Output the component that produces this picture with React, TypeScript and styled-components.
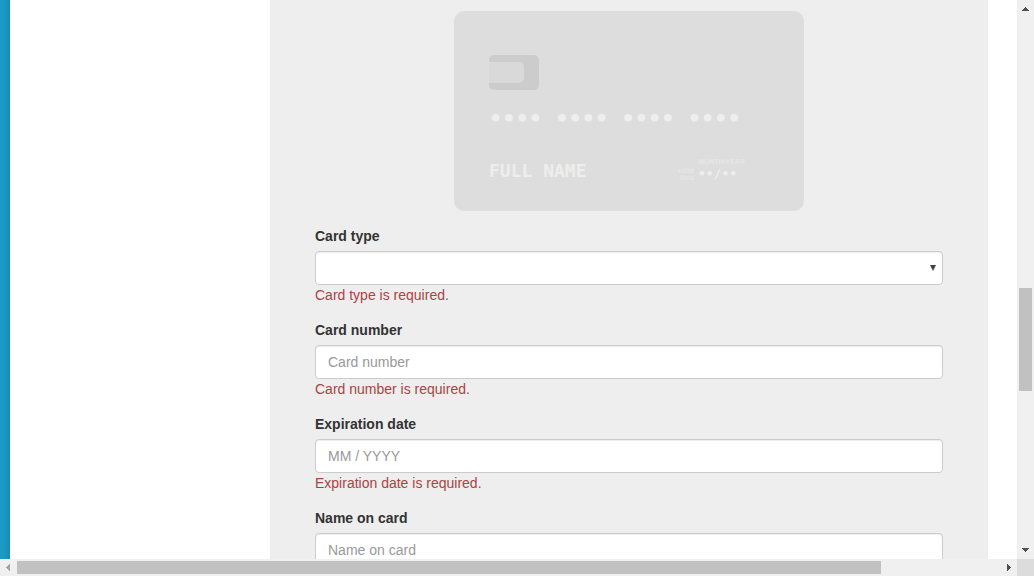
import React from "react";
import styled, { createGlobalStyle } from "styled-components";

const Global = createGlobalStyle`
  * { box-sizing: border-box; }
  body {
    margin: 0;
    font-family: "Liberation Sans", Arial, sans-serif;
    font-size: 14px;
    line-height: 20px;
    color: #333;
    background: #fff;
  }
`;

const Shell = styled.div`
  display: grid;
  grid-template-columns: minmax(0, 1fr) 17px;
  grid-template-rows: minmax(0, 1fr) 17px;
  height: 100vh;
  overflow: hidden;
`;

const Page = styled.div`
  display: flex;
  overflow: hidden;
  background: #fff;
`;

const Edge = styled.div`
  flex: 0 0 10px;
  background: linear-gradient(to right, #1b9ac5, #1b9ac5 40%, #178ab2);
`;

const Sidebar = styled.aside`
  flex: 0 0 260px;
`;

const Panel = styled.main`
  flex: 1;
  margin-right: 29px;
  padding: 11px 45px 0;
  background: #eee;
`;

const Card = styled.section`
  display: flex;
  flex-direction: column;
  width: 350px;
  height: 200px;
  margin: 0 auto 15px;
  padding: 44px 35px 0;
  border-radius: 10px;
  background: #ddd;
  color: #eee;
  font-family: "DejaVu Sans Mono", monospace;
  font-weight: bold;
`;

const Chip = styled.div`
  display: flex;
  align-items: center;
  width: 50px;
  height: 35px;
  border-radius: 5px;
  background: #ccc;
`;

const ChipInner = styled.div`
  width: 35px;
  height: 21px;
  border-radius: 0 5px 5px 0;
  background: #d9d9d9;
`;

const CardNumber = styled.div`
  margin-top: 16px;
  font-size: 22px;
  line-height: 26px;
  white-space: pre;
`;

const CardFooter = styled.div`
  display: flex;
  justify-content: space-between;
  margin-top: 26px;
  padding-right: 24px;
`;

const CardName = styled.div`
  padding-top: 2px;
  font-size: 18px;
  line-height: 22px;
`;

const Expiry = styled.div`
  display: grid;
  grid-template-columns: auto auto;
  column-gap: 4px;
  align-content: start;
`;

const Caption = styled.div`
  grid-column: 2;
  color: #e6e6e6;
  font: bold 7px/7px "Liberation Sans", Arial, sans-serif;
`;

const ValidThru = styled.div`
  padding-top: 2px;
  color: #e6e6e6;
  font: bold 7px/7px "Liberation Sans", Arial, sans-serif;
  text-align: right;
`;

const ExpiryDate = styled.div`
  font-size: 13px;
  line-height: 17px;
`;

const Field = styled.div`
  display: flex;
  flex-direction: column;
  margin-bottom: 15px;
`;

const Label = styled.label`
  margin-bottom: 5px;
  font-weight: bold;
`;

const Input = styled.input`
  width: 100%;
  height: 34px;
  padding: 6px 12px;
  border: 1px solid #ccc;
  border-radius: 4px;
  background: #fff;
  box-shadow: inset 0 1px 1px rgba(0, 0, 0, 0.075);
  color: #555;
  font: inherit;
  &::placeholder { color: #999; opacity: 1; }
`;

const SelectWrap = styled.div`
  position: relative;
`;

const Select = styled(Input).attrs({ as: "select" })`
  display: block;
  appearance: none;
`;

const SelectArrow = styled.svg`
  position: absolute;
  top: 14px;
  right: 6px;
  pointer-events: none;
`;

const ErrorText = styled.div`
  color: #a94442;
`;

const Track = styled.div<{ $vertical?: boolean }>`
  display: flex;
  flex-direction: ${(p) => (p.$vertical ? "column" : "row")};
  background: #f0f0f0;
  overflow: hidden;
`;

const ArrowBox = styled.svg`
  flex: 0 0 17px;
`;

const Rail = styled.div<{ $vertical?: boolean }>`
  flex: 1;
  display: flex;
  flex-direction: ${(p) => (p.$vertical ? "column" : "row")};
  padding: ${(p) => (p.$vertical ? "0 2px" : "2px 0")};
`;

const Space = styled.div<{ $grow: number }>`
  flex: ${(p) => p.$grow} 1 0;
`;

const Thumb = styled(Space)`
  background: #c1c1c1;
`;

const Corner = styled.div`
  background: #dcdcdc;
`;

type FieldProps = { id: string; label: string; placeholder?: string; error?: string };

function TextField({ id, label, placeholder, error }: FieldProps) {
  return (
    <Field>
      <Label htmlFor={id}>{label}</Label>
      <Input id={id} type="text" placeholder={placeholder} />
      {error && <ErrorText>{error}</ErrorText>}
    </Field>
  );
}

function Arrow({ d, fill = "#505050" }: { d: string; fill?: string }) {
  return (
    <ArrowBox width="17" height="17" viewBox="0 0 17 17" shapeRendering="crispEdges" aria-hidden="true">
      <path d={d} fill={fill} />
    </ArrowBox>
  );
}

export default function App() {
  return (
    <>
      <Global />
      <Shell>
        <Page>
          <Edge />
          <Sidebar />
          <Panel>
            <Card>
              <Chip>
                <ChipInner />
              </Chip>
              <CardNumber>•••• •••• •••• ••••</CardNumber>
              <CardFooter>
                <CardName>FULL NAME</CardName>
                <Expiry>
                  <Caption>MONTH/YEAR</Caption>
                  <ValidThru>
                    valid
                    <br />
                    thru
                  </ValidThru>
                  <ExpiryDate>••/••</ExpiryDate>
                </Expiry>
              </CardFooter>
            </Card>
            <Field>
              <Label htmlFor="card-type">Card type</Label>
              <SelectWrap>
                <Select id="card-type" />
                <SelectArrow width="7" height="6" viewBox="0 0 7 6" aria-hidden="true">
                  <path d="M0 0H6L3 6Z" fill="#444" />
                </SelectArrow>
              </SelectWrap>
              <ErrorText>Card type is required.</ErrorText>
            </Field>
            <TextField id="card-number" label="Card number" placeholder="Card number" error="Card number is required." />
            <TextField id="expiration" label="Expiration date" placeholder="MM / YYYY" error="Expiration date is required." />
            <TextField id="card-name" label="Name on card" placeholder="Name on card" />
          </Panel>
        </Page>
        <Track $vertical>
          <Arrow d="M8 7h1v1h1v1h1v1h1v1H5v-1h1V9h1V8h1z" />
          <Rail $vertical>
            <Space $grow={271} />
            <Thumb $grow={103} />
            <Space $grow={151} />
          </Rail>
          <Arrow d="M5 6h7v1h-1v1h-1v1H9v1H8V9H7V8H6V7H5z" />
        </Track>
        <Track>
          <Arrow d="M10 5v7H9v-1H8v-1H7V9H6V8h1V7h1V6h1V5z" fill="#a3a3a3" />
          <Rail>
            <Thumb $grow={864} />
            <Space $grow={119} />
          </Rail>
          <Arrow d="M7 5h1v1h1v1h1v1h1v1h-1v1H9v1H8v1H7z" />
        </Track>
        <Corner />
      </Shell>
    </>
  );
}
